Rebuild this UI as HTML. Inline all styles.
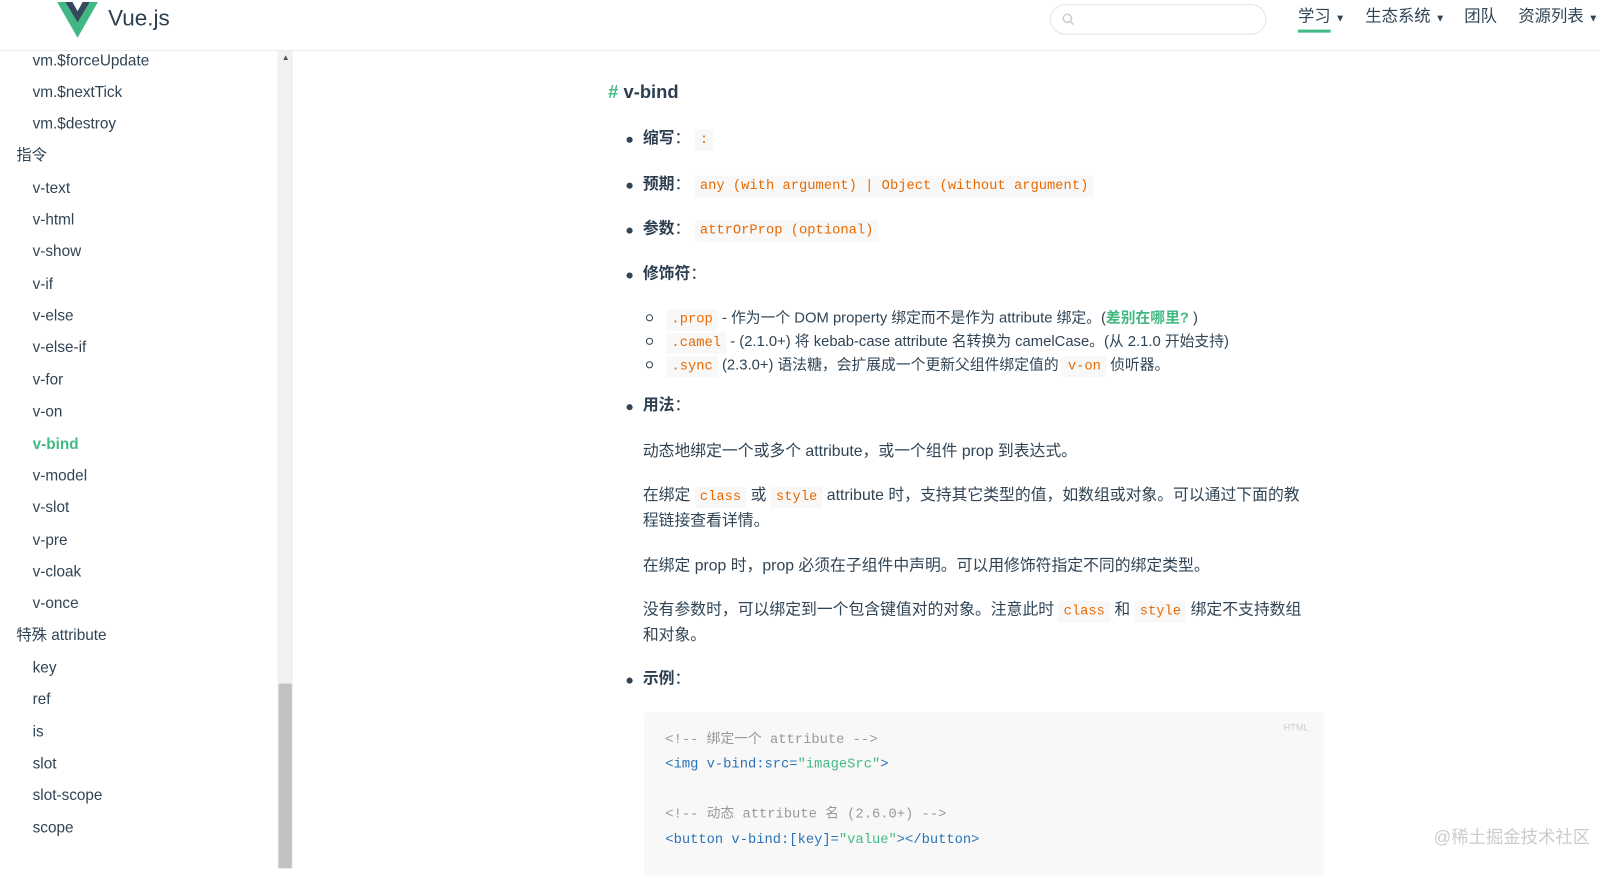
<!DOCTYPE html>
<html><head><meta charset="utf-8"><style>
*{margin:0;padding:0;box-sizing:border-box}
body{width:1600px;height:851px;overflow:hidden;background:#fff;font-family:"Liberation Sans","Noto Sans CJK SC",sans-serif;color:#304455;position:relative}
#w{position:absolute;left:0;top:0;width:1568px;height:834px;transform:scale(1.0204);transform-origin:0 0}
.a{position:absolute;white-space:nowrap}
header{position:absolute;left:0;top:0;width:1568px;height:50px;border-bottom:1px solid #eaecef;background:#fff}
.side{position:absolute;left:0;top:50px;width:272px;height:801px}
.side div{position:absolute;font-size:15px;color:#304455;line-height:20px}
.sb{position:absolute;left:272px;top:50px;width:15px;height:801px;background:#f1f1f1}
.thumb{position:absolute;left:273px;top:670px;width:13px;height:181px;background:#c1c1c1}
.t{font-size:15.5px;line-height:20px;color:#304455}
code,.c{font-family:"Liberation Mono","Noto Sans CJK SC",monospace;color:#e96900;background:#f8f8f8;font-size:13.5px;padding:3px 5px;border-radius:2px}
b{font-weight:bold;color:#2c3e50}
.dot{position:absolute;width:6px;height:6px;border-radius:50%;background:#304455}
.circ{position:absolute;width:7px;height:7px;border-radius:50%;border:1px solid #304455}
.pre{position:absolute;left:631px;top:698px;width:667px;height:160px;background:#f8f8f8}
.pre div{position:absolute;left:21px;font-family:"Liberation Mono","Noto Sans CJK SC",monospace;font-size:13.5px;line-height:20px;color:#525252;white-space:nowrap}
</style></head><body><div id="w">
<header>
<svg class="a" style="left:56px;top:2px" width="40" height="35" viewBox="0 0 40 35"><polygon points="0,0 8,0 20,20 32,0 40,0 20,35" fill="#41b883"/><polygon points="8,0 15,0 20,9 25,0 32,0 20,20" fill="#34495e"/></svg>
<div class="a" style="left:106px;top:5px;font-size:22px;color:#2c3e50">Vue.js</div>
<div class="a" style="left:1029px;top:4px;width:212px;height:30px;border:1px solid #e3e3e3;border-radius:15px"></div>
<svg class="a" style="left:1040px;top:12px" width="14" height="14" viewBox="0 0 14 14"><circle cx="6" cy="6" r="4" fill="none" stroke="#ccc" stroke-width="1.5"/><line x1="9" y1="9" x2="12" y2="12" stroke="#ccc" stroke-width="1.5"/></svg>
<div class="a t" style="left:1272px;top:7px;font-size:16px">学习 <span style="font-size:10px">▼</span></div>
<div class="a" style="left:1272px;top:29px;width:32px;height:3px;background:#42b983"></div>
<div class="a t" style="left:1338px;top:7px;font-size:16px">生态系统 <span style="font-size:10px">▼</span></div>
<div class="a t" style="left:1435px;top:7px;font-size:16px">团队</div>
<div class="a t" style="left:1488px;top:7px;font-size:16px">资源列表 <span style="font-size:10px">▼</span></div>
</header>
<div class="side">
<div style="left:32px;top:0">vm.$forceUpdate</div>
<div style="left:32px;top:31px">vm.$nextTick</div>
<div style="left:32px;top:62px">vm.$destroy</div>
<div style="left:16px;top:93px">指令</div>
<div style="left:32px;top:125px">v-text</div>
<div style="left:32px;top:156px">v-html</div>
<div style="left:32px;top:187px">v-show</div>
<div style="left:32px;top:219px">v-if</div>
<div style="left:32px;top:250px">v-else</div>
<div style="left:32px;top:281px">v-else-if</div>
<div style="left:32px;top:313px">v-for</div>
<div style="left:32px;top:344px">v-on</div>
<div style="left:32px;top:376px;color:#42b983;font-weight:bold">v-bind</div>
<div style="left:32px;top:407px">v-model</div>
<div style="left:32px;top:438px">v-slot</div>
<div style="left:32px;top:470px">v-pre</div>
<div style="left:32px;top:501px">v-cloak</div>
<div style="left:32px;top:532px">v-once</div>
<div style="left:16px;top:563px">特殊 attribute</div>
<div style="left:32px;top:595px">key</div>
<div style="left:32px;top:626px">ref</div>
<div style="left:32px;top:658px">is</div>
<div style="left:32px;top:689px">slot</div>
<div style="left:32px;top:720px">slot-scope</div>
<div style="left:32px;top:752px">scope</div>
</div>
<div class="sb"></div><div class="thumb"></div>
<div class="a" style="left:276px;top:52px;font-size:8px;color:#555">▲</div>

<div class="a" style="left:596px;top:80px;font-size:18px;font-weight:bold;color:#2c3e50"><span style="color:#42b983">#</span> v-bind</div>
<div class="dot" style="left:614px;top:134px"></div><div class="a t" style="left:630px;top:126px"><b>缩写</b>： <code>:</code></div>
<div class="dot" style="left:614px;top:179px"></div><div class="a t" style="left:630px;top:171px"><b>预期</b>： <code>any (with argument) | Object (without argument)</code></div>
<div class="dot" style="left:614px;top:223px"></div><div class="a t" style="left:630px;top:215px"><b>参数</b>： <code>attrOrProp (optional)</code></div>
<div class="dot" style="left:614px;top:267px"></div><div class="a t" style="left:630px;top:259px"><b>修饰符</b>：</div>
<div class="circ" style="left:633px;top:308px"></div><div class="a t" style="left:653px;top:302px;font-size:14.5px"><code>.prop</code> - 作为一个 DOM property 绑定而不是作为 attribute 绑定。(<b style="color:#42b983">差别在哪里?</b> )</div>
<div class="circ" style="left:633px;top:331px"></div><div class="a t" style="left:653px;top:325px;font-size:14.5px"><code>.camel</code> - (2.1.0+) 将 kebab-case attribute 名转换为 camelCase。(从 2.1.0 开始支持)</div>
<div class="circ" style="left:633px;top:354px"></div><div class="a t" style="left:653px;top:348px;font-size:14.5px"><code>.sync</code> (2.3.0+) 语法糖，会扩展成一个更新父组件绑定值的 <code>v-on</code> 侦听器。</div>
<div class="dot" style="left:614px;top:396px"></div><div class="a t" style="left:630px;top:388px"><b>用法</b>：</div>
<div class="a t" style="left:630px;top:433px">动态地绑定一个或多个 attribute，或一个组件 prop 到表达式。</div>
<div class="a t" style="left:630px;top:476px">在绑定 <code>class</code> 或 <code>style</code> attribute 时，支持其它类型的值，如数组或对象。可以通过下面的教</div>
<div class="a t" style="left:630px;top:501px">程链接查看详情。</div>
<div class="a t" style="left:630px;top:545px">在绑定 prop 时，prop 必须在子组件中声明。可以用修饰符指定不同的绑定类型。</div>
<div class="a t" style="left:630px;top:588px">没有参数时，可以绑定到一个包含键值对的对象。注意此时 <code>class</code> 和 <code>style</code> 绑定不支持数组</div>
<div class="a t" style="left:630px;top:613px">和对象。</div>
<div class="dot" style="left:614px;top:664px"></div><div class="a t" style="left:630px;top:656px"><b>示例</b>：</div>
<div class="pre">
<div style="left:627px;top:5px;font-size:9px;color:#ccc;font-family:'Liberation Sans',sans-serif">HTML</div>
<div style="top:18px;color:#999">&lt;!-- 绑定一个 attribute --&gt;</div>
<div style="top:42px;color:#2973b7">&lt;img v-bind:src=<span style="color:#42b983">"imageSrc"</span>&gt;</div>
<div style="top:91px;color:#999">&lt;!-- 动态 attribute 名 (2.6.0+) --&gt;</div>
<div style="top:116px;color:#2973b7">&lt;button v-bind:[key]=<span style="color:#42b983">"value"</span>&gt;&lt;/button&gt;</div>
</div>
<div class="a" style="left:1405px;top:806px;font-size:17px;color:#ccc">@稀土掘金技术社区</div>
</div></body></html>
